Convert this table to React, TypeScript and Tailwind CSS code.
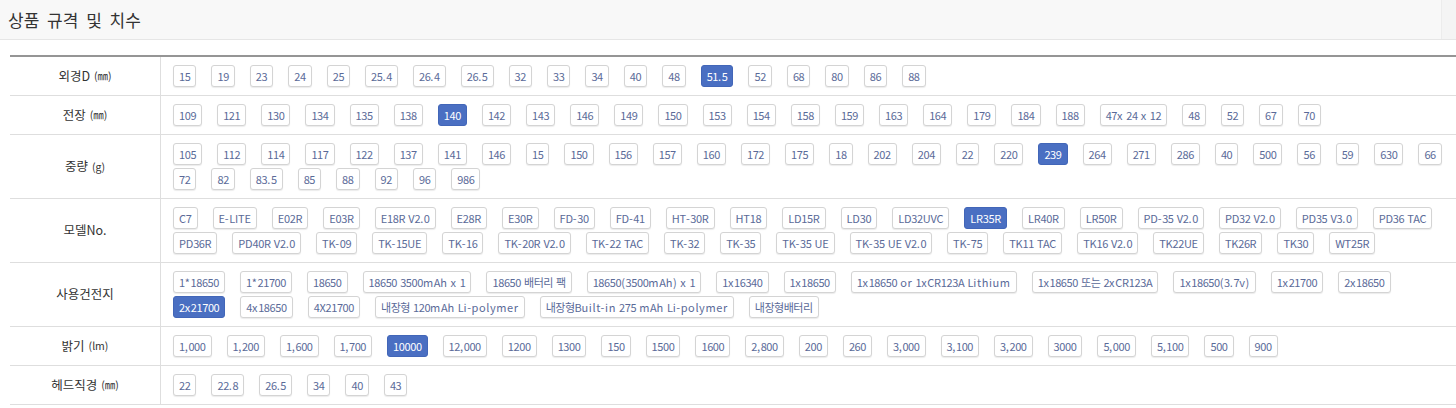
import React from "react";

interface SpecRow {
  label: string;
  unit?: string;
  lines: string[][];
  selected: string;
}

const rows: SpecRow[] = [
  {
    label: "외경D",
    unit: "(㎜)",
    selected: "51.5",
    lines: [["15", "19", "23", "24", "25", "25.4", "26.4", "26.5", "32", "33", "34", "40", "48", "51.5", "52", "68", "80", "86", "88"]],
  },
  {
    label: "전장",
    unit: "(㎜)",
    selected: "140",
    lines: [["109", "121", "130", "134", "135", "138", "140", "142", "143", "146", "149", "150", "153", "154", "158", "159", "163", "164", "179", "184", "188", "47x 24 x 12", "48", "52", "67", "70"]],
  },
  {
    label: "중량",
    unit: "(g)",
    selected: "239",
    lines: [
      ["105", "112", "114", "117", "122", "137", "141", "146", "15", "150", "156", "157", "160", "172", "175", "18", "202", "204", "22", "220", "239", "264", "271", "286", "40", "500", "56", "59", "630", "66"],
      ["72", "82", "83.5", "85", "88", "92", "96", "986"],
    ],
  },
  {
    label: "모델No.",
    selected: "LR35R",
    lines: [
      ["C7", "E-LITE", "E02R", "E03R", "E18R V2.0", "E28R", "E30R", "FD-30", "FD-41", "HT-30R", "HT18", "LD15R", "LD30", "LD32UVC", "LR35R", "LR40R", "LR50R", "PD-35 V2.0", "PD32 V2.0", "PD35 V3.0", "PD36 TAC"],
      ["PD36R", "PD40R V2.0", "TK-09", "TK-15UE", "TK-16", "TK-20R V2.0", "TK-22 TAC", "TK-32", "TK-35", "TK-35 UE", "TK-35 UE V2.0", "TK-75", "TK11 TAC", "TK16 V2.0", "TK22UE", "TK26R", "TK30", "WT25R"],
    ],
  },
  {
    label: "사용건전지",
    selected: "2x21700",
    lines: [
      ["1*18650", "1*21700", "18650", "18650 3500mAh x 1", "18650 배터리 팩", "18650(3500mAh) x 1", "1x16340", "1x18650", "1x18650 or 1xCR123A Lithium", "1x18650 또는 2xCR123A", "1x18650(3.7v)", "1x21700", "2x18650"],
      ["2x21700", "4x18650", "4X21700", "내장형 120mAh Li-polymer", "내장형Built-in 275 mAh Li-polymer", "내장형배터리"],
    ],
  },
  {
    label: "밝기",
    unit: "(lm)",
    selected: "10000",
    lines: [["1,000", "1,200", "1,600", "1,700", "10000", "12,000", "1200", "1300", "150", "1500", "1600", "2,800", "200", "260", "3,000", "3,100", "3,200", "3000", "5,000", "5,100", "500", "900"]],
  },
  {
    label: "헤드직경",
    unit: "(㎜)",
    selected: "",
    lines: [["22", "22.8", "26.5", "34", "40", "43"]],
  },
];

// the original font has narrow digits and capitals, wider lowercase
function ChipText({ text }: { text: string }) {
  const parts = text.match(/\d+|[가-힣]+|[A-Z]+|[^\dA-Z가-힣]+/g) || [];
  return (
    <>
      {parts.map((p, i) => {
        let cls = "tracking-[0.6px]";
        if (/^\d/.test(p)) cls = "tracking-[-0.4px]";
        else if (/^[가-힣]/.test(p)) cls = "tracking-[-0.5px]";
        else if (/^[A-Z]/.test(p)) cls = "tracking-[-0.2px]";
        return (
          <span key={i} className={cls}>
            {p}
          </span>
        );
      })}
    </>
  );
}

function Chip({ text, active }: { text: string; active: boolean }) {
  return (
    <span
      className={
        active
          ? "inline-flex h-[22px] items-center whitespace-pre rounded-[3px] border border-[#4266b8] bg-[#4a6fc2] px-[5px] text-[11px] text-white"
          : "inline-flex h-[22px] items-center whitespace-pre rounded-[3px] border border-[#d4d4d4] bg-white px-[5px] text-[11px] text-[#5a6a98] shadow-[0_1px_1px_rgba(0,0,0,0.08)]"
      }
    >
      <ChipText text={text} />
    </span>
  );
}

export default function App() {
  return (
    <div
      className="w-[1456px] bg-white text-[#333]"
      style={{ fontFamily: '"Noto Sans CJK KR", "Noto Sans", sans-serif' }}
    >
      {/* title bar */}
      <div className="flex h-[40px] border-b border-[#e6e6e6]">
        <div className="flex flex-1 items-center bg-[#f8f8f8] pl-[8px] text-[17px] text-[#333] [word-spacing:4px]">
          상품 규격 및 치수
        </div>
        <div className="w-[15px] border-l border-[#ececec] bg-[#f4f4f4]" />
      </div>

      <div className="pl-[10px] pt-[15px]">
        <div className="border-t-2 border-[#959595]">
          {rows.map((row) => (
            <div key={row.label} className="flex border-b border-[#dedede]">
              <div className="flex w-[151px] shrink-0 items-center justify-center border-r border-[#dedede] text-[12.5px] text-[#333]">
                {row.label}
                {row.unit && <span className="ml-[4px] text-[10.5px]">{row.unit}</span>}
              </div>
              <div className="flex flex-col gap-[3px] py-[8px] pl-[12px]">
                {row.lines.map((line, i) => (
                  <div key={i} className="flex gap-x-[15px]">
                    {line.map((t) => (
                      <Chip key={t} text={t} active={t === row.selected} />
                    ))}
                  </div>
                ))}
              </div>
            </div>
          ))}
        </div>
      </div>
    </div>
  );
}
